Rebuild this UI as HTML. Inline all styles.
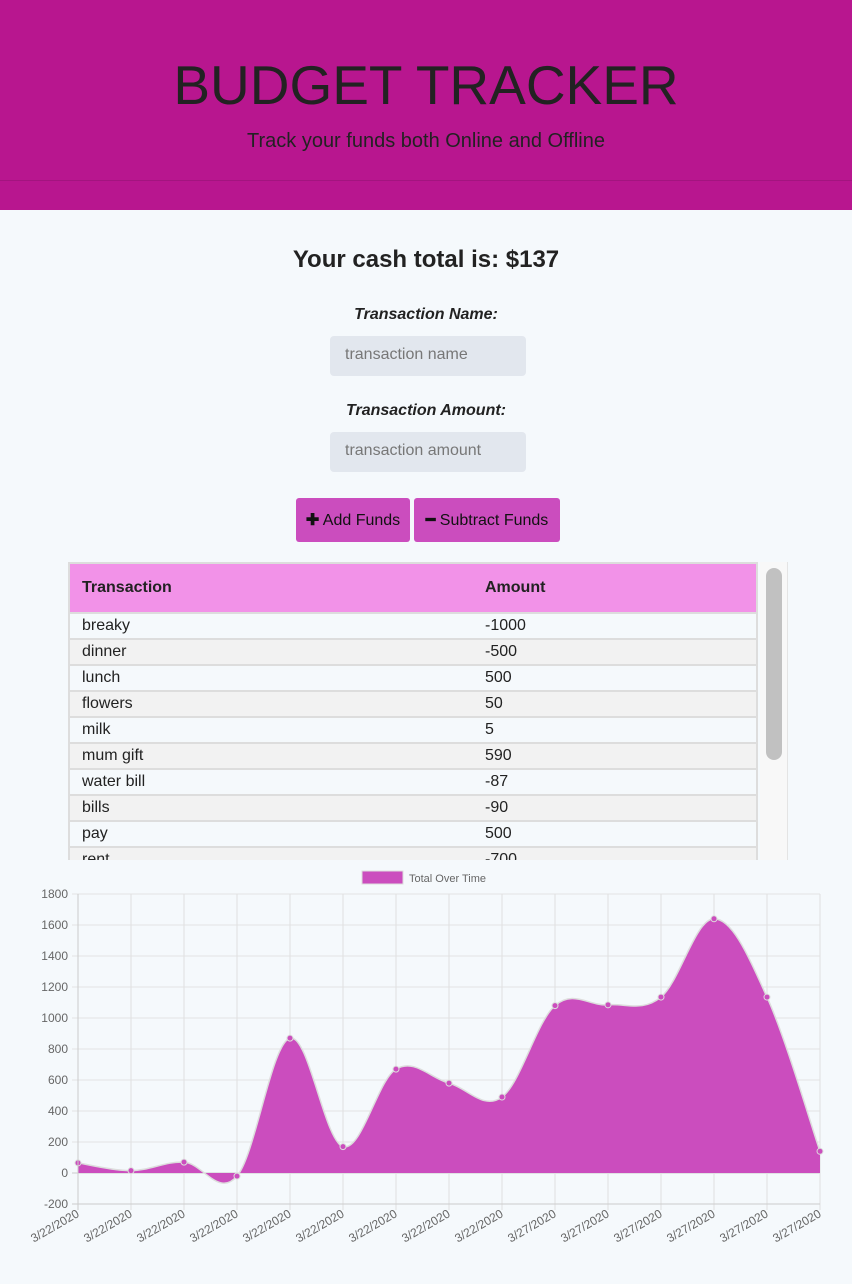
<!DOCTYPE html>
<html><head><meta charset="utf-8"><style>
*{box-sizing:border-box;margin:0;padding:0}
body{width:852px;height:1284px;background:#f5f9fc;font-family:"Liberation Sans",sans-serif;color:#222;position:relative;overflow:hidden}
.hdr{position:absolute;left:0;top:0;width:852px;height:210px;background:#b8168f}
.hdr .ln{position:absolute;left:0;top:180px;width:852px;height:1px;background:#a3147f}
.t{position:absolute;left:0;width:852px;text-align:center}
.inp{position:absolute;left:330px;width:196px;height:40px;background:#e2e7ee;border-radius:4px;color:#777;font-size:16px;padding:10px 0 0 15px}
.btn{position:absolute;top:498px;height:44px;background:#cb4dbe;border-radius:3px;font-size:16px;color:#111;padding-top:12px;text-align:center}
table{position:absolute;left:68px;top:562px;width:690px;border-collapse:collapse;font-size:16px}
th{background:#f292e8;height:50px;text-align:left;padding-left:12px;font-weight:bold;border-top:2px solid #ddd;border-bottom:2px solid #ddd}
th:first-child{border-left:2px solid #ddd}
th:last-child{border-right:2px solid #ddd}
td{height:26px;padding-left:12px;border:2px solid #ddd;border-left:none;border-right:none}
tr:nth-child(odd) td{background:#f2f2f2}
tr td:first-child{border-left:2px solid #ddd}
tr td:last-child{border-right:2px solid #ddd}
</style></head><body>
<div class="hdr"><div class="ln"></div></div>
<div class="t" style="top:53px;font-size:55px;color:#222">BUDGET TRACKER</div>
<div class="t" style="top:130px;font-size:20px;color:#222">Track your funds both Online and Offline</div>
<div class="t" style="top:246px;font-size:24px;font-weight:bold">Your cash total is: $137</div>
<div class="t" style="top:306px;font-size:16px;font-weight:bold;font-style:italic">Transaction Name:</div>
<div class="inp" style="top:336px">transaction name</div>
<div class="t" style="top:402px;font-size:16px;font-weight:bold;font-style:italic">Transaction Amount:</div>
<div class="inp" style="top:432px">transaction amount</div>
<div class="btn" style="left:296px;width:114px"><b>✚</b> Add Funds</div>
<div class="btn" style="left:414px;width:146px"><b>━</b> Subtract Funds</div>
<div style="position:absolute;left:0;top:562px;width:852px;height:298px;overflow:hidden">
<table style="top:0">
<tr><th style="width:404px">Transaction</th><th>Amount</th></tr>
<tr><td>breaky</td><td>-1000</td></tr>
<tr><td>dinner</td><td>-500</td></tr>
<tr><td>lunch</td><td>500</td></tr>
<tr><td>flowers</td><td>50</td></tr>
<tr><td>milk</td><td>5</td></tr>
<tr><td>mum gift</td><td>590</td></tr>
<tr><td>water bill</td><td>-87</td></tr>
<tr><td>bills</td><td>-90</td></tr>
<tr><td>pay</td><td>500</td></tr>
<tr><td>rent</td><td>-700</td></tr>
</table>
<div style="position:absolute;left:760px;top:0;width:28px;height:298px;background:#f8f8f8;border-right:1px solid #e4e4e4"></div>
<div style="position:absolute;left:766px;top:6px;width:16px;height:192px;background:#c1c1c1;border-radius:8px"></div>
</div>
<svg id="ch" style="position:absolute;left:0;top:860px" width="852" height="424" font-family="Liberation Sans, sans-serif" font-size="12" fill="#666"></svg>
<script>
var s=document.getElementById('ch'),o=860,h='';
var X0=78,X1=820,dx=(X1-X0)/14;
function Y(v){return 1173-v*0.155-o}
h+='<rect x="362" y="11" width="41" height="13" fill="#cb4dbe" stroke="#ddd"/><text x="409" y="22" font-size="11" fill="#666">Total Over Time</text>';
for(var i=0;i<=10;i++){var v=1800-i*200,y=Y(v);h+='<line x1="72" x2="820" y1="'+y+'" y2="'+y+'" stroke="'+(v==0?'#ccc':'#e3e3e3')+'"/><text x="68" y="'+(y+4)+'" text-anchor="end">'+v+'</text>';}
for(var i=0;i<15;i++){var x=X0+i*dx;h+='<line x1="'+x+'" x2="'+x+'" y1="'+Y(1800)+'" y2="'+(Y(-200)+6)+'" stroke="#e0e0e0"/>';
h+='<text transform="translate('+(x+2)+','+(Y(-200)+12)+') rotate(-30)" text-anchor="end">'+(i<9?'3/22/2020':'3/27/2020')+'</text>';}
var V=[65,15,70,-20,870,170,670,580,490,1080,1085,1135,1640,1135,140];
var P=V.map(function(v,i){return[X0+i*dx,Y(v)]});
var d='M'+P[0][0]+','+P[0][1],t=0.35;
for(var i=0;i<14;i++){var p0=P[Math.max(i-1,0)],p1=P[i],p2=P[i+1],p3=P[Math.min(i+2,14)];
var c1=[p1[0]+(p2[0]-p0[0])*t/2,p1[1]+(p2[1]-p0[1])*t/2],c2=[p2[0]-(p3[0]-p1[0])*t/2,p2[1]-(p3[1]-p1[1])*t/2];
d+=' C'+c1+' '+c2+' '+p2;}
h+='<path d="'+d+' L'+X1+','+Y(0)+' L'+X0+','+Y(0)+'Z" fill="#cb4dbe"/><path d="'+d+'" fill="none" stroke="#ddd" stroke-width="1.5"/>';
P.forEach(function(p){h+='<circle cx="'+p[0]+'" cy="'+p[1]+'" r="3" fill="#cb4dbe" stroke="#ddd"/>'});
h+='<line x1="'+X0+'" x2="'+X0+'" y1="'+Y(1800)+'" y2="'+(Y(-200)+6)+'" stroke="#ccc"/><line x1="72" x2="820" y1="'+Y(-200)+'" y2="'+Y(-200)+'" stroke="#ccc"/>';
s.innerHTML=h;
</script>
</body></html>
